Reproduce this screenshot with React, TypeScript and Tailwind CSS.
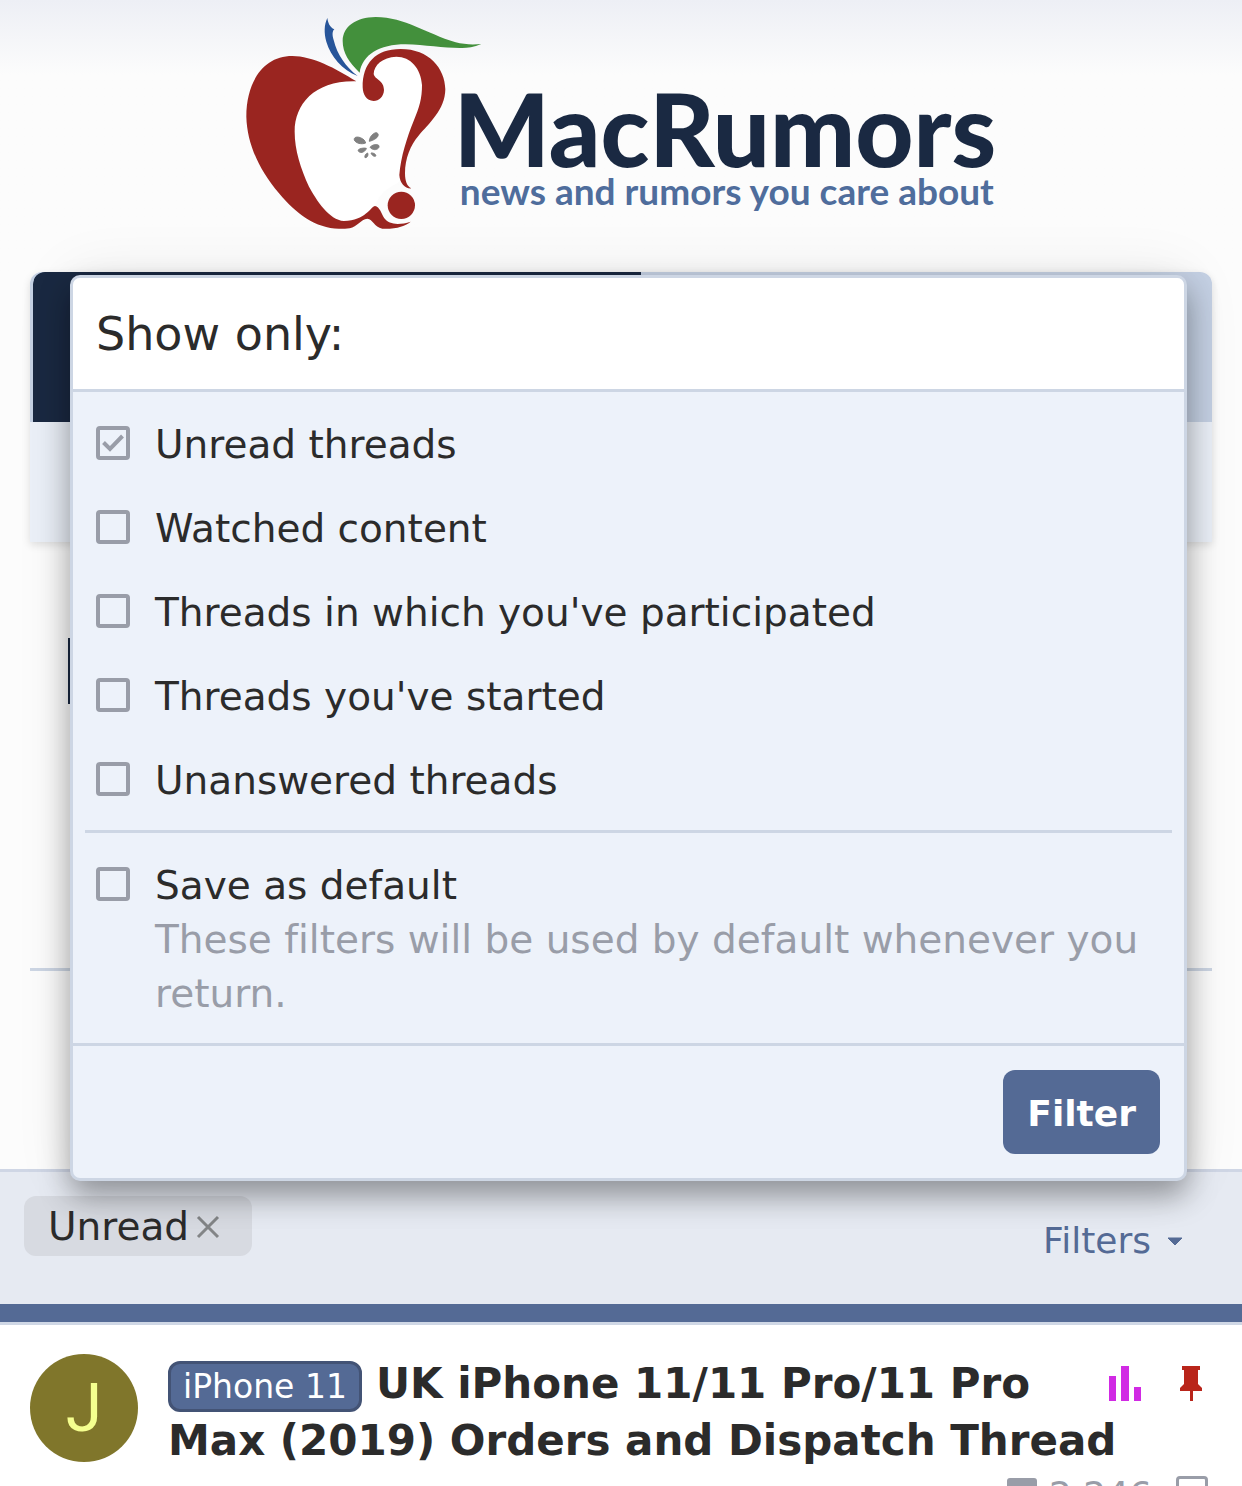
import { ReactNode } from "react";

const filters = [
    { id: "unread", label: "Unread threads", checked: true },
    { id: "watched", label: "Watched content", checked: false },
    { id: "participated", label: "Threads in which you've participated", checked: false },
    { id: "started", label: "Threads you've started", checked: false },
    { id: "unanswered", label: "Unanswered threads", checked: false },
];

function AppleLogo() {
    return (
        <svg viewBox="51 48 708 642" className="w-[236px] h-[214px] shrink-0" aria-hidden="true">
            <path fill="#fff" d="M382 244 C260 240 190 310 190 395 C197 480 250 620 345 668 C410 662 425 630 438 618 C460 560 500 560 515 540 C520 470 560 380 585 300 L580 200 L502 160 L420 200 Z" />
            <path fill="#9a2520" d="M382 244 C320 205 250 168 190 168 C100 168 52 250 52 350 C54 430 90 510 150 580 C200 640 260 686 330 686 C345 686 352 687 362 685 C385 680 395 658 415 656 C432 658 435 680 460 686 C500 688 530 678 545 665 C510 676 480 674 466 655 C457 640 452 620 438 618 C425 620 410 662 345 663 C300 660 262 600 240 560 C215 505 197 450 197 395 C197 310 260 240 382 244 Z" />
            <path fill="#9a2520" d="M401 262 C400 190 440 147 515 147 C600 147 648 205 649 268 C648 330 600 370 568 408 C545 435 528 475 528 520 C528 545 535 560 547 565 C530 567 512 550 511 525 C515 470 535 410 553 365 C572 320 579 295 579 255 C576 205 545 170 502 170 C460 172 435 195 434 222 C438 240 465 240 465 270 C464 290 450 303 434 303 C412 302 402 285 401 262 Z" />
            <circle cx="517" cy="616" r="41" fill="#9a2520" />
            <path fill="#43903c" d="M392 218 C360 185 341 160 341 122 C342 80 380 52 440 51 C530 52 590 100 680 127 C705 134 735 134 757 132 C735 141 715 144 700 144 C650 145 590 135 530 133 C450 133 400 165 392 218 Z" />
            <path fill="#27559a" d="M295 54 C297 68 302 82 316 88 C310 92 309 105 314 120 C325 165 350 200 386 228 C340 210 305 170 292 125 C285 100 285 75 295 54 Z" />
            <g fill="#808080" stroke="#808080" strokeWidth="3">
                <path d="M410 429 C398 434 380 430 376 420 C374 412 383 409 394 413 C404 417 408 422 410 429 Z" />
                <path d="M421 424 C421 412 431 399 442 398 C450 400 449 409 441 415 C434 420 428 422 421 424 Z" />
                <path d="M423 442 C430 434 442 431 449 436 C453 443 445 449 437 449 C431 448 426 446 423 442 Z" />
                <path d="M412 445 C404 443 391 445 387 451 C389 458 398 459 404 455 C409 452 411 449 412 445 Z" />
                <path d="M416 459 C410 461 406 468 408 473 C414 474 419 467 416 459 Z" />
                <path d="M426 459 C433 458 440 462 441 467 C437 472 429 467 426 459 Z" />
            </g>
        </svg>
    );
}

interface CheckboxRowProps {
    id: string;
    checked?: boolean;
    children: ReactNode;
}

function CheckboxRow({ id, checked = false, children }: CheckboxRowProps) {
    return (
        <div className="flex items-start gap-[25px] text-[39px] leading-[54px]">
            <span className="grid mt-2 shrink-0">
                <input
                    id={id}
                    type="checkbox"
                    defaultChecked={checked}
                    className="peer col-start-1 row-start-1 appearance-none w-[34px] h-[34px] border-4 border-[#999da8] rounded-[4px]"
                />
                <svg viewBox="0 0 34 34" className="col-start-1 row-start-1 w-[34px] h-[34px] pointer-events-none hidden peer-checked:block" aria-hidden="true">
                    <path d="M7.500 16.500 L14 23 L26.500 10" fill="none" stroke="#999da8" strokeWidth="4" />
                </svg>
            </span>
            <div>{children}</div>
        </div>
    );
}

function FilterMenu() {
    return (
        <form
            onSubmit={(e) => e.preventDefault()}
            className="absolute top-[275px] left-[70px] right-[55px] overflow-hidden bg-[#edf2fa] border-[3px] border-[#cdd6e4] rounded-[10px] shadow-[0_15px_30px_rgba(0,0,0,0.35),0_0_60px_rgba(0,0,0,0.08)]"
        >
            <h2 className="px-[23px] pt-[29px] pb-[27px] text-[46px] leading-[55px] bg-white border-b-[3px] border-[#cdd6e4]">Show only:</h2>
            <div className="pt-[26px] pb-[22px] px-[23px] flex flex-col gap-[30px]">
                {filters.map((f) => (
                    <CheckboxRow key={f.id} id={f.id} checked={f.checked}>
                        <label htmlFor={f.id}>{f.label}</label>
                    </CheckboxRow>
                ))}
            </div>
            <hr className="mx-3 border-0 h-[3px] bg-[#cdd6e4]" />
            <div className="px-[23px] pt-[26px] pb-[22px]">
                <CheckboxRow id="save">
                    <label htmlFor="save">Save as default</label>
                    <p className="text-[#999da8] [font-variant-ligatures:none]">These filters will be used by default whenever you return.</p>
                </CheckboxRow>
            </div>
            <div className="flex justify-end p-6 border-t-[3px] border-[#cdd6e4]">
                <button type="submit" className="px-6 pt-1 h-[84px] rounded-xl bg-[#546a95] text-white text-[36px] font-bold">
                    Filter
                </button>
            </div>
        </form>
    );
}

function FilterBar() {
    return (
        <div className="h-[135px] shrink-0 flex items-start justify-between pt-6 pl-6 pr-[59px] bg-[#e6eaf2] border-t-[3px] border-[#cfd6e5]">
            <button className="flex items-center h-[60px] pt-[2px] pl-6 pr-8 gap-[7px] rounded-xl bg-[#d7dae1] text-[39px]">
                Unread
                <svg viewBox="0 0 24 24" className="w-6 h-6" aria-label="Remove filter">
                    <path d="M2 2 L22 22 M22 2 L2 22" stroke="#838587" strokeWidth="3" />
                </svg>
            </button>
            <button className="flex items-center gap-4 h-[90px] text-[36px] text-[#546a95]">
                Filters
                <svg viewBox="0 0 16 9" className="w-4 h-[9px]" aria-hidden="true">
                    <path d="M1 1 H15 L8 8 Z" fill="#546a95" stroke="#546a95" />
                </svg>
            </button>
        </div>
    );
}

function ThreadRow() {
    return (
        <article className="flex items-start gap-[30px] pt-[29px] px-[30px] bg-white grow">
            <a href="#member" className="flex items-center justify-center w-[108px] h-[108px] shrink-0 rounded-full bg-[#80762b] text-[#f5ff8f] font-[Roboto] text-[66px]">
                J
            </a>
            <div className="grow min-w-0">
                <div className="flex gap-[38px] float-right pt-3 pr-[10px]">
                    <svg viewBox="0 0 34 36" className="w-[34px] h-9" role="img" aria-label="Poll" fill="#d12ae4">
                        <rect x="1" y="10" width="7" height="25" />
                        <rect x="13" y="0" width="8" height="35" />
                        <rect x="26" y="21" width="7" height="14" />
                    </svg>
                    <svg viewBox="0 0 22 36" className="w-[22px] h-9" role="img" aria-label="Sticky" fill="#b9251a">
                        <path d="M2 0 H20 V4 H18 V18 L22 22 V25 H13 V35 H10 V25 H0 V22 L4 18 V4 H2 Z" />
                    </svg>
                </div>
                <h3 className="pt-[1px] text-[42px] leading-[57px] font-bold">
                    <a href="#prefix" className="inline-block align-middle mr-[14px] px-3 border-[3px] border-[#435375] rounded-xl bg-[#546a95] text-white text-[33px] leading-[45px] font-normal">iPhone 11</a>
                    <a href="#thread">UK iPhone 11/11 Pro/11 Pro Max (2019) Orders and Dispatch Thread</a>
                </h3>
                <div className="flex justify-end items-start gap-3 pt-[7px] pr-1 text-[36px] leading-[38px] text-[#999da8]">
                    <span className="mt-[2px] w-[30px] h-6 rounded-[3px] bg-[#999da8]" />
                    <span>2,246</span>
                    <span className="ml-3 w-8 h-8 border-[3px] border-[#999da8] rounded-[4px]" />
                </div>
            </div>
        </article>
    );
}

export default function App() {
    return (
        <div className="relative h-screen overflow-hidden flex flex-col bg-[#fcfcfc] text-[#2b2b2b] font-['DejaVu_Sans',Verdana,sans-serif]">
            <header className="shrink-0 h-[272px] pt-4 bg-linear-to-b from-[#edeff5] to-[#fcfcfc] to-[75px]">
                <a href="#home" className="flex justify-center font-[Lato]">
                    <AppleLogo />
                    <span className="-ml-[28px] pt-[60px]">
                        <span className="block text-[101px] leading-[104px] font-black text-[#1a2942]">MacRumors</span>
                        <span className="block pl-[6px] text-[37px] leading-[22px] font-bold text-[#4f6d9c]">news and rumors you care about</span>
                    </span>
                </a>
            </header>

            <nav className="shrink-0 mx-[30px] shadow-[0_3px_9px_rgba(0,0,0,0.12)] rounded-t-xl">
                <div className="flex h-[150px] border-l-[3px] border-[#c5d1e4] rounded-t-xl overflow-hidden bg-[#c5d1e4]">
                    <span className="w-[608px] rounded-tl-xl bg-[#1a2942]" />
                </div>
                <div className="h-[120px] bg-[#ebf0f8]" />
            </nav>

            <div className="shrink-0 mx-[30px] h-[429px] pt-24 px-[38px] border-b-[3px] border-[#cdd6e4]">
                <div className="w-1 h-[66px] bg-[#1a2942]" />
            </div>
            <div className="shrink-0 h-[198px]" />

            <FilterBar />
            <div className="shrink-0 h-[21px] bg-[#546a95] border-b-[3px] border-[#cfd7e5]" />
            <ThreadRow />
            <FilterMenu />
        </div>
    );
}
